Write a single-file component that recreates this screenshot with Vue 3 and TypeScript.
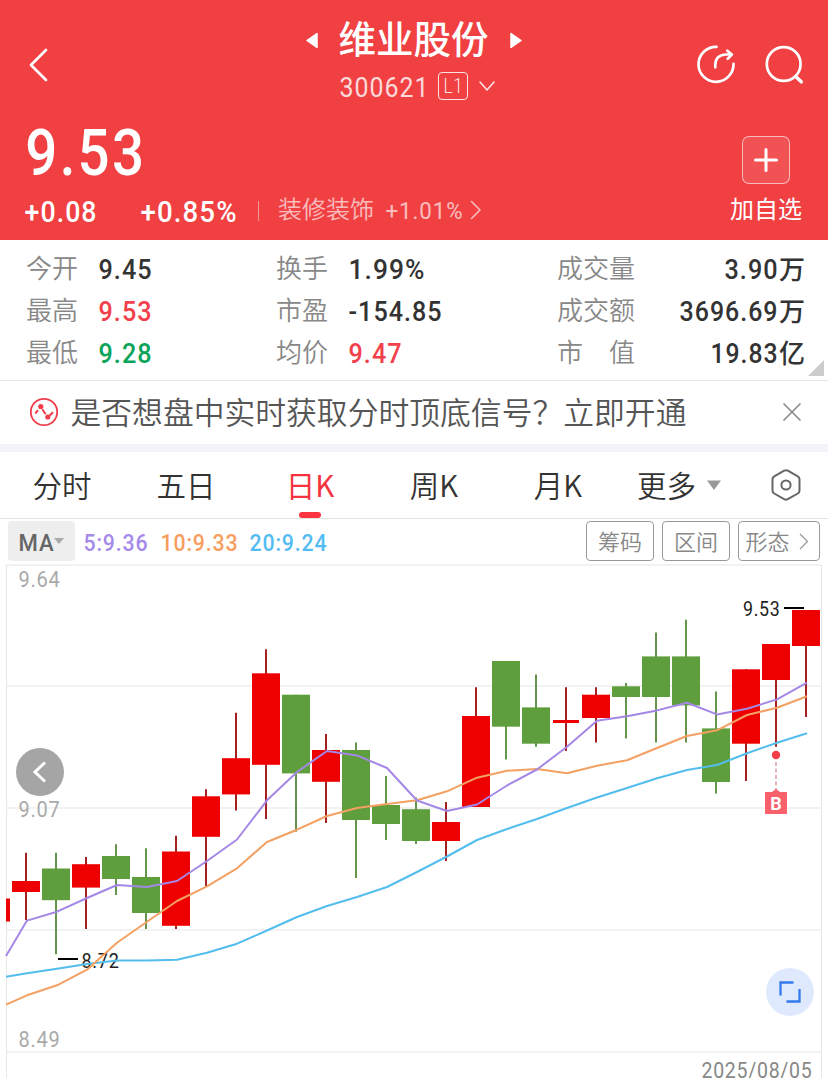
<script setup lang="ts">
import { h } from 'vue'
import type { FunctionalComponent } from 'vue'

interface FigureProps {
  text: string
  size: number
  width: number
  weight?: number
}

// A run of condensed digits fitted to a fixed width; its box is as tall as the digits.
const Figure: FunctionalComponent<FigureProps> = (props) => {
  const cap = Math.round(props.size * 0.711)
  return h('svg', { width: props.width, height: cap, overflow: 'visible' }, [
    h('text', {
      x: props.size * 0.02,
      y: cap,
      fill: 'currentColor',
      'font-family': 'Roboto, "Liberation Sans", sans-serif',
      'font-size': props.size,
      'font-weight': props.weight ?? 500,
      'letter-spacing': props.size * 0.04,
      textLength: props.width,
      lengthAdjust: 'spacingAndGlyphs',
    }, props.text),
  ])
}
Figure.props = ['text', 'size', 'width', 'weight']

interface Stat { label: string; value: string; width: number; unit?: string; tone?: string }

const columns: { name: string; stats: Stat[] }[] = [
  {
    name: 'first',
    stats: [
      { label: '今开', value: '9.45', width: 54 },
      { label: '最高', value: '9.53', width: 54, tone: 'up' },
      { label: '最低', value: '9.28', width: 54, tone: 'down' },
    ],
  },
  {
    name: 'second',
    stats: [
      { label: '换手', value: '1.99%', width: 77 },
      { label: '市盈', value: '-154.85', width: 94 },
      { label: '均价', value: '9.47', width: 54, tone: 'up' },
    ],
  },
  {
    name: 'third',
    stats: [
      { label: '成交量', value: '3.90', width: 54, unit: '万' },
      { label: '成交额', value: '3696.69', width: 99, unit: '万' },
      { label: '市值', value: '19.83', width: 68, unit: '亿' },
    ],
  },
]

const tabs = ['分时', '五日', '日K', '周K', '月K']
const activeTab = '日K'

const averages = [
  { text: '5:9.36', width: 65, name: 'ma5' },
  { text: '10:9.33', width: 78, name: 'ma10' },
  { text: '20:9.24', width: 78, name: 'ma20' },
]

// [kind, body top, body bottom, wick top, wick bottom]
type Candle = ['r' | 'g', number, number, number, number]
const candles: Candle[] = [
  ['r', 881, 892, 852.7, 920],
  ['g', 868.5, 900.2, 852.7, 954.3],
  ['r', 864.2, 887.6, 857, 929],
  ['g', 856, 879, 844.3, 895],
  ['g', 877, 913, 848.3, 929],
  ['r', 851.5, 925.8, 835.7, 929],
  ['r', 796.3, 836.8, 789.2, 886],
  ['r', 758.2, 794.4, 712.7, 810.5],
  ['r', 673.3, 764.8, 649.3, 819],
  ['g', 694.7, 773.4, 694.7, 831.7],
  ['r', 750, 781.8, 734, 823],
  ['g', 750, 820, 742.4, 878],
  ['g', 805, 824, 776, 840],
  ['g', 809.2, 841, 797.5, 844],
  ['r', 822, 841, 802, 861],
  ['r', 716, 807, 687.3, 807],
  ['g', 661, 726.7, 661, 759.6],
  ['g', 707.4, 743.7, 674.4, 746.7],
  ['r', 720, 723, 687.3, 751],
  ['r', 694.7, 718, 687.3, 742.6],
  ['g', 686.3, 697, 683, 738.4],
  ['g', 656.4, 697, 632.4, 742.6],
  ['g', 656.4, 705.4, 619.7, 742.6],
  ['g', 728.4, 782, 691.4, 793.4],
  ['r', 669.3, 743.7, 669.3, 781],
  ['r', 644, 680, 644, 746.7],
  ['r', 610, 646, 610, 717],
]

const TOP = 564
const candleShapes = candles.map(([kind, top, bottom, high, low], i) => ({
  kind,
  x: 26 + i * 30,
  top: top - TOP,
  height: bottom - top,
  high: high - TOP,
  low: low - TOP,
}))

const trace = (values: number[]): string =>
  values.map((v, i) => `${i === 0 ? 6 : 27 + (i - 1) * 30},${(v - TOP).toFixed(1)}`).join(' ')

const ma5 = trace([956, 920.6, 911.7, 898, 885, 887, 881, 861, 839.5, 800.3, 772, 751, 755.4, 768, 800.5, 811, 804.5, 785.5, 769.5, 746.7, 720.7, 716.3, 710.4, 702.8, 714.4, 708.7, 699.4, 682.7])
const ma10 = trace([1004.7, 995.3, 985.3, 969.7, 942.7, 921.7, 901, 886.3, 868.3, 842, 829.7, 816, 808, 804, 800.3, 791.3, 777.7, 770.7, 769, 773.3, 765.7, 760.3, 748, 736, 730.3, 715, 707.7, 696.3])
const ma20 = trace([976.7, 973.3, 968.7, 964, 960.6, 960.4, 959.7, 952.7, 943.7, 930.5, 917, 906, 897, 887, 872, 856.5, 840, 829, 819, 808, 797.5, 788, 778.3, 770, 765, 753.3, 742.7, 733.3])
</script>

<template>
  <div class="screen">
    <header class="header">
      <div class="nav">
        <svg class="back" width="20" height="34" viewBox="0 0 20 34"><path d="M18 2 3 17l15 15" /></svg>
        <div class="heading">
          <div class="title-row">
            <svg width="12" height="17" viewBox="0 0 12 17"><path d="M11 1.500v14L1 8.500z" class="arrow" /></svg>
            <h1>维业股份</h1>
            <svg width="12" height="17" viewBox="0 0 12 17"><path d="M1 1.500v14l10-7z" class="arrow" /></svg>
          </div>
          <div class="code-row">
            <Figure class="code" text="300621" :size="27.5" :width="90" :weight="400" />
            <span class="level"><Figure text="L1" :size="20" :width="20" :weight="300" /></span>
            <svg class="drop" width="16" height="11" viewBox="0 0 16 11"><path d="m1 1 7 8 7-8" /></svg>
          </div>
        </div>
        <div class="actions">
          <svg width="40" height="40" viewBox="0 0 40 40">
            <path d="M20.500 1.800A17.500 17.500 0 1 0 37.500 18.800" />
            <path d="M19.300 22.300V20Q19.300 10 30 9.500H35" />
            <path d="m31.300 5.700 4.600 3.800-4.200 4.300" />
          </svg>
          <svg width="40" height="40" viewBox="0 0 40 40"><circle cx="19.700" cy="19" r="16.900" /><path d="m31.700 31.500 5.600 5.300" class="handle" /></svg>
        </div>
      </div>
      <div class="quote">
        <div class="price-block">
          <Figure text="9.53" :size="65" :width="121" />
          <div class="changes">
            <Figure text="+0.08" :size="29" :width="73" />
            <Figure class="percent" text="+0.85%" :size="29" :width="97" />
            <i class="divider"></i>
            <span class="sector">装修装饰</span>
            <Figure class="sector-change" text="+1.01%" :size="24" :width="78" :weight="400" />
            <svg class="sector-more" width="12" height="20" viewBox="0 0 12 20"><path d="m1.500 1.500 8.500 8.500-8.500 8.500" /></svg>
          </div>
        </div>
        <div class="favorite">
          <span class="plus"><svg width="26" height="26" viewBox="0 0 26 26"><path d="M13 2.500v21M2.500 13h21" /></svg></span>
          <span class="favorite-label">加自选</span>
        </div>
      </div>
    </header>

    <section class="stats">
      <div v-for="column in columns" :key="column.name" class="column" :class="column.name">
        <div v-for="stat in column.stats" :key="stat.label" class="stat">
          <span class="label"><template v-if="stat.label === '市值'"><span>市</span><span>值</span></template><template v-else>{{ stat.label }}</template></span>
          <span class="value" :class="stat.tone">
            <Figure :text="stat.value" :size="28" :width="stat.width" />
            <span v-if="stat.unit" class="unit">{{ stat.unit }}</span>
          </span>
        </div>
      </div>
      <svg class="corner" width="16" height="16" viewBox="0 0 16 16"><path d="M16 0v16H0z" fill="#ccc" /></svg>
    </section>

    <section class="notice">
      <svg class="notice-icon" width="30" height="30" viewBox="0 0 30 30">
        <circle cx="15" cy="15" r="13.200" class="ring" />
        <path d="M6.300 16.500 9 13.200M13.300 12.300l3.400 5M20.700 18.500l3.300-3.300" class="zig" />
        <circle cx="11.800" cy="9.500" r="2.600" class="dot" /><circle cx="18.800" cy="20" r="2.600" class="dot" />
      </svg>
      <span class="notice-text">是否想盘中实时获取分时顶底信号？立即开通</span>
      <svg class="close" width="20" height="20" viewBox="0 0 20 20"><path d="m1.500 1.500 17 17m0-17-17 17" /></svg>
    </section>

    <nav class="tabs">
      <span v-for="tab in tabs" :key="tab" class="tab" :class="{ active: tab === activeTab }">{{ tab }}</span>
      <span class="more">更多</span>
      <svg class="more-arrow" width="16" height="11" viewBox="0 0 16 11"><path d="M1 .5h14L8 10z" fill="#999" /></svg>
      <svg class="settings" width="32" height="34" viewBox="0 0 32 34">
        <path d="M14.200 2.700q1.800-1 3.600 0l10 5.600q1.700 1 1.700 3v11.200q0 2-1.700 3l-10 5.700q-1.800 1-3.600 0l-10-5.700q-1.700-1-1.700-3V11.300q0-2 1.700-3z" />
        <circle cx="16" cy="17" r="4.600" />
      </svg>
    </nav>

    <section class="indicators">
      <span class="ma"><Figure text="MA" :size="24" :width="36" /><svg width="10" height="6" viewBox="0 0 10 6"><path d="M0 0h10L5 6z" fill="#aaa" /></svg></span>
      <Figure v-for="item in averages" :key="item.name" class="average" :class="item.name" :text="item.text" :size="24" :width="item.width" />
      <div class="tools">
        <span class="tool"><span>筹码</span></span>
        <span class="tool"><span>区间</span></span>
        <span class="tool wide"><span>形态</span><svg width="10" height="17" viewBox="0 0 10 17"><path d="m1 1 7.500 7.500L1 16" /></svg></span>
      </div>
    </section>

    <section class="chart">
      <svg width="828" height="514" viewBox="0 0 828 514">
        <g class="grid">
          <path d="M6 1h816M6 122h816M6 244h816M6 366h816M6 488h816" />
          <path d="M6.500 1v513M821.500 1v513" class="side" />
        </g>
        <g class="axis">
          <text x="18.500" y="23" textLength="42" lengthAdjust="spacingAndGlyphs">9.64</text>
          <text x="18.500" y="253" textLength="42" lengthAdjust="spacingAndGlyphs">9.07</text>
          <text x="18.500" y="483" textLength="42" lengthAdjust="spacingAndGlyphs">8.49</text>
        </g>
        <rect x="6" y="334.500" width="4" height="23" fill="#e00" />
        <g v-for="c in candleShapes" :key="c.x" :class="c.kind">
          <path :d="`M${c.x} ${c.high}V${c.low}`" class="wick" />
          <rect :x="c.x - (c.height < 4 ? 13 : 14)" :y="c.top" :width="c.height < 4 ? 26 : 28" :height="c.height" />
        </g>
        <g class="marks">
          <path d="M58 395h20M784 44h20" />
          <text x="81.500" y="403.500" textLength="38" lengthAdjust="spacingAndGlyphs">8.72</text>
          <text x="743" y="52" textLength="37.500" lengthAdjust="spacingAndGlyphs">9.53</text>
        </g>
        <g class="lines">
          <polyline :points="ma20" class="l20" />
          <polyline :points="ma10" class="l10" />
          <polyline :points="ma5" class="l5" />
        </g>
        <g class="signal">
          <circle cx="776" cy="191" r="4.200" />
          <path d="M776 198v28" class="dash" />
          <path d="M765 228h7l4-3 4 3h7v22h-22z" class="tag" />
          <text x="776" y="245.500" text-anchor="middle">B</text>
        </g>
        <text class="date" x="701.500" y="514" textLength="111" lengthAdjust="spacingAndGlyphs">2025/08/05</text>
      </svg>
      <button class="prev" type="button"><svg width="14" height="22" viewBox="0 0 14 22"><path d="M12 1.500 2 11l10 9.500" /></svg></button>
      <button class="expand" type="button"><svg width="24" height="24" viewBox="0 0 24 24"><path d="M2.500 15.500v-13h13M21.500 9v12.500h-13" /></svg></button>
    </section>
  </div>
</template>

<style>
body { margin: 0; background: #fff; }
</style>

<style scoped>
.screen {
  width: 828px;
  height: 1078px;
  overflow: hidden;
  background: #fff;
  font-family: "Noto Sans CJK SC", sans-serif;
  font-weight: 350;
  color: #333;
}
svg { display: block; flex: none; fill: none; }
.header { height: 240px; background: #f04042; color: #fff; }
.header path, .header circle { stroke: #fff; stroke-width: 2.7; stroke-linecap: round; stroke-linejoin: round; }
.header .handle { stroke-width: 3.5; }
.nav { display: flex; justify-content: space-between; height: 120px; padding: 0 24px 0 28px; }
.back { margin-top: 48px; }
.actions { display: flex; gap: 28px; margin-top: 45px; }
.heading { margin-left: 88px; width: 220px; padding-top: 15px; }
.title-row { display: flex; align-items: center; height: 51px; }
.header .arrow { fill: #fff; stroke-width: 1.5; }
h1 { margin: -7px 20px 0 20.5px; font-size: 37.5px; line-height: 50px; font-weight: 500; width: 151px; white-space: nowrap; }
.code-row { display: flex; align-items: center; height: 40px; padding-left: 33px; }
.code { opacity: .8; margin-top: 2px; }
.level { display: flex; align-items: center; justify-content: center; box-sizing: border-box; width: 30px; height: 28px; margin-left: 9px; border: 1px solid #fff; border-radius: 4px; opacity: .85; }
.drop { margin-left: 11px; opacity: .85; }
.header .drop path { stroke-width: 1.6; }
.quote { display: flex; justify-content: space-between; padding: 0 26px 0 24px; }
.price-block { padding-top: 9px; }
.changes { display: flex; align-items: center; height: 30px; margin-top: 21px; }
.percent { margin-left: 43px; }
.divider { width: 1px; height: 20px; margin-left: 21px; background: #fff; opacity: .45; }
.sector { margin: -6px 11px 0 19px; font-size: 24px; line-height: 30px; opacity: .65; }
.sector-change { opacity: .65; margin-top: -2px; }
.sector-more { margin: -3px 0 0 7px; opacity: .65; }
.header .sector-more path { stroke-width: 1.6; }
.favorite { display: flex; flex-direction: column; align-items: center; width: 72px; padding-top: 16px; }
.plus { display: flex; align-items: center; justify-content: center; box-sizing: border-box; width: 48px; height: 48px; border: 1px solid rgba(255, 255, 255, .6); border-radius: 7px; background: rgba(255, 255, 255, .1); }
.header .plus path { stroke-width: 3; }
.favorite-label { margin-top: 8px; font-size: 24px; line-height: 32px; font-weight: 400; white-space: nowrap; }

.stats { position: relative; display: flex; box-sizing: border-box; height: 141px; padding: 8px 23px 0 26px; border-bottom: 1px solid #e8e8e8; }
.first { width: 250px; }
.second { width: 281px; }
.third { flex: 1; }
.stat { display: flex; align-items: center; height: 42px; }
.label { display: flex; justify-content: space-between; font-size: 26px; line-height: 40px; color: #888; }
.first .label, .second .label { width: 72px; justify-content: flex-start; margin-top: -4px; }
.third .label { width: 78px; margin-top: -4px; }
.value { display: flex; align-items: center; color: #333; }
.value.up { color: #f2404c; }
.value.down { color: #0ba45a; }
.third .value { margin-left: auto; }
.unit { font-size: 26px; line-height: 40px; font-weight: 500; margin-top: -3px; margin-left: 1px; }
.corner { position: absolute; right: 4px; bottom: 4px; }

.notice { display: flex; align-items: center; height: 63px; padding: 0 26px 0 29px; border-bottom: 8px solid #f3f4f9; }
.notice-icon { margin-top: -1px; }
.notice .ring { stroke: #f03c4b; stroke-width: 1.8; }
.notice .zig { stroke: #f03c4b; stroke-width: 2; }
.notice .dot { fill: #f03c4b; }
.notice-text { margin: -4px 0 0 11.5px; font-size: 30.8px; line-height: 40px; color: #555; white-space: nowrap; }
.close { margin: -1px 0 0 auto; }
.close path { stroke: #888; stroke-width: 1.6; }

.tabs { display: flex; align-items: center; box-sizing: border-box; height: 67px; border-bottom: 1px solid #e2e2e2; font-size: 29.5px; color: #333; }
.tab { position: relative; width: 124px; text-align: center; line-height: 64px; height: 66px; }
.active { color: #f5333f; font-weight: 400; }
.active::after { content: ""; position: absolute; left: 51px; bottom: 0; width: 22px; height: 6px; border-radius: 3px; background: #fb3440; }
.more { margin-left: 17px; height: 66px; line-height: 64px; }
.more-arrow { margin-left: 10px; }
.settings { margin-left: 48px; }
.settings path, .settings circle { stroke: #666; stroke-width: 2; }

.indicators { display: flex; align-items: center; box-sizing: border-box; height: 45px; padding: 2px 8px 3px; }
.ma { display: flex; align-items: center; gap: 0; box-sizing: border-box; width: 67px; height: 40px; padding-left: 10px; border-radius: 4px; background: #eee; color: #666; }
.ma > :first-child { margin-top: 3px; }
.average { margin-top: 2px; }
.ma5 { margin-left: 8px; color: #a68aea; }
.ma10 { margin-left: 12px; color: #f79e5e; }
.ma20 { margin-left: 11px; color: #54bcf2; }
.tools { display: flex; gap: 8px; margin-left: auto; }
.tool { display: flex; align-items: center; justify-content: center; box-sizing: border-box; width: 68px; height: 40px; border: 1px solid #999; border-radius: 4px; font-size: 22px; line-height: 34px; color: #888; }
.tool span { margin-top: -3px; }
.wide { width: 82px; gap: 9px; padding-right: 4px; }
.tool path { stroke: #999; stroke-width: 1.3; }

.chart { position: relative; height: 514px; }
.chart text { font-family: Roboto, "Liberation Sans", sans-serif; font-size: 21.5px; font-weight: 400; letter-spacing: .8px; }
.grid path { stroke: #f2f2f2; stroke-width: 2; }
.grid .side { stroke: #e6e6e6; stroke-width: 1; }
.axis { fill: #aaa; }
.wick { stroke-width: 2; }
.r { fill: #e00; }
.r .wick { stroke: #a52020; }
.g { fill: #5f9e3c; }
.g .wick { stroke: #65944b; }
.marks { fill: #222; }
.marks path { stroke: #000; stroke-width: 2; }
.chart .marks text { font-size: 20.5px; }
.lines polyline { stroke-width: 2; stroke-linejoin: round; }
.l5 { stroke: #a588e6; }
.l10 { stroke: #f3a063; }
.l20 { stroke: #53bdee; }
.signal circle { fill: #f43c48; }
.signal .dash { stroke: #dda0a5; stroke-width: 1.6; stroke-dasharray: 4 2.5; }
.signal .tag { fill: #f8606c; }
.chart .signal text { fill: #fff; font-size: 18px; font-weight: 700; letter-spacing: 0; }
.chart .date { fill: #888; font-size: 21.5px; }
button { position: absolute; display: flex; align-items: center; justify-content: center; width: 48px; height: 48px; padding: 0; border: 0; border-radius: 50%; }
.prev { left: 16px; top: 184px; background: #a5a5a5; }
.prev path { stroke: #fff; stroke-width: 3; }
.expand { left: 766px; top: 404px; background: #dfe9fd; }
.expand path { stroke: #3479ed; stroke-width: 2.3; }
</style>
